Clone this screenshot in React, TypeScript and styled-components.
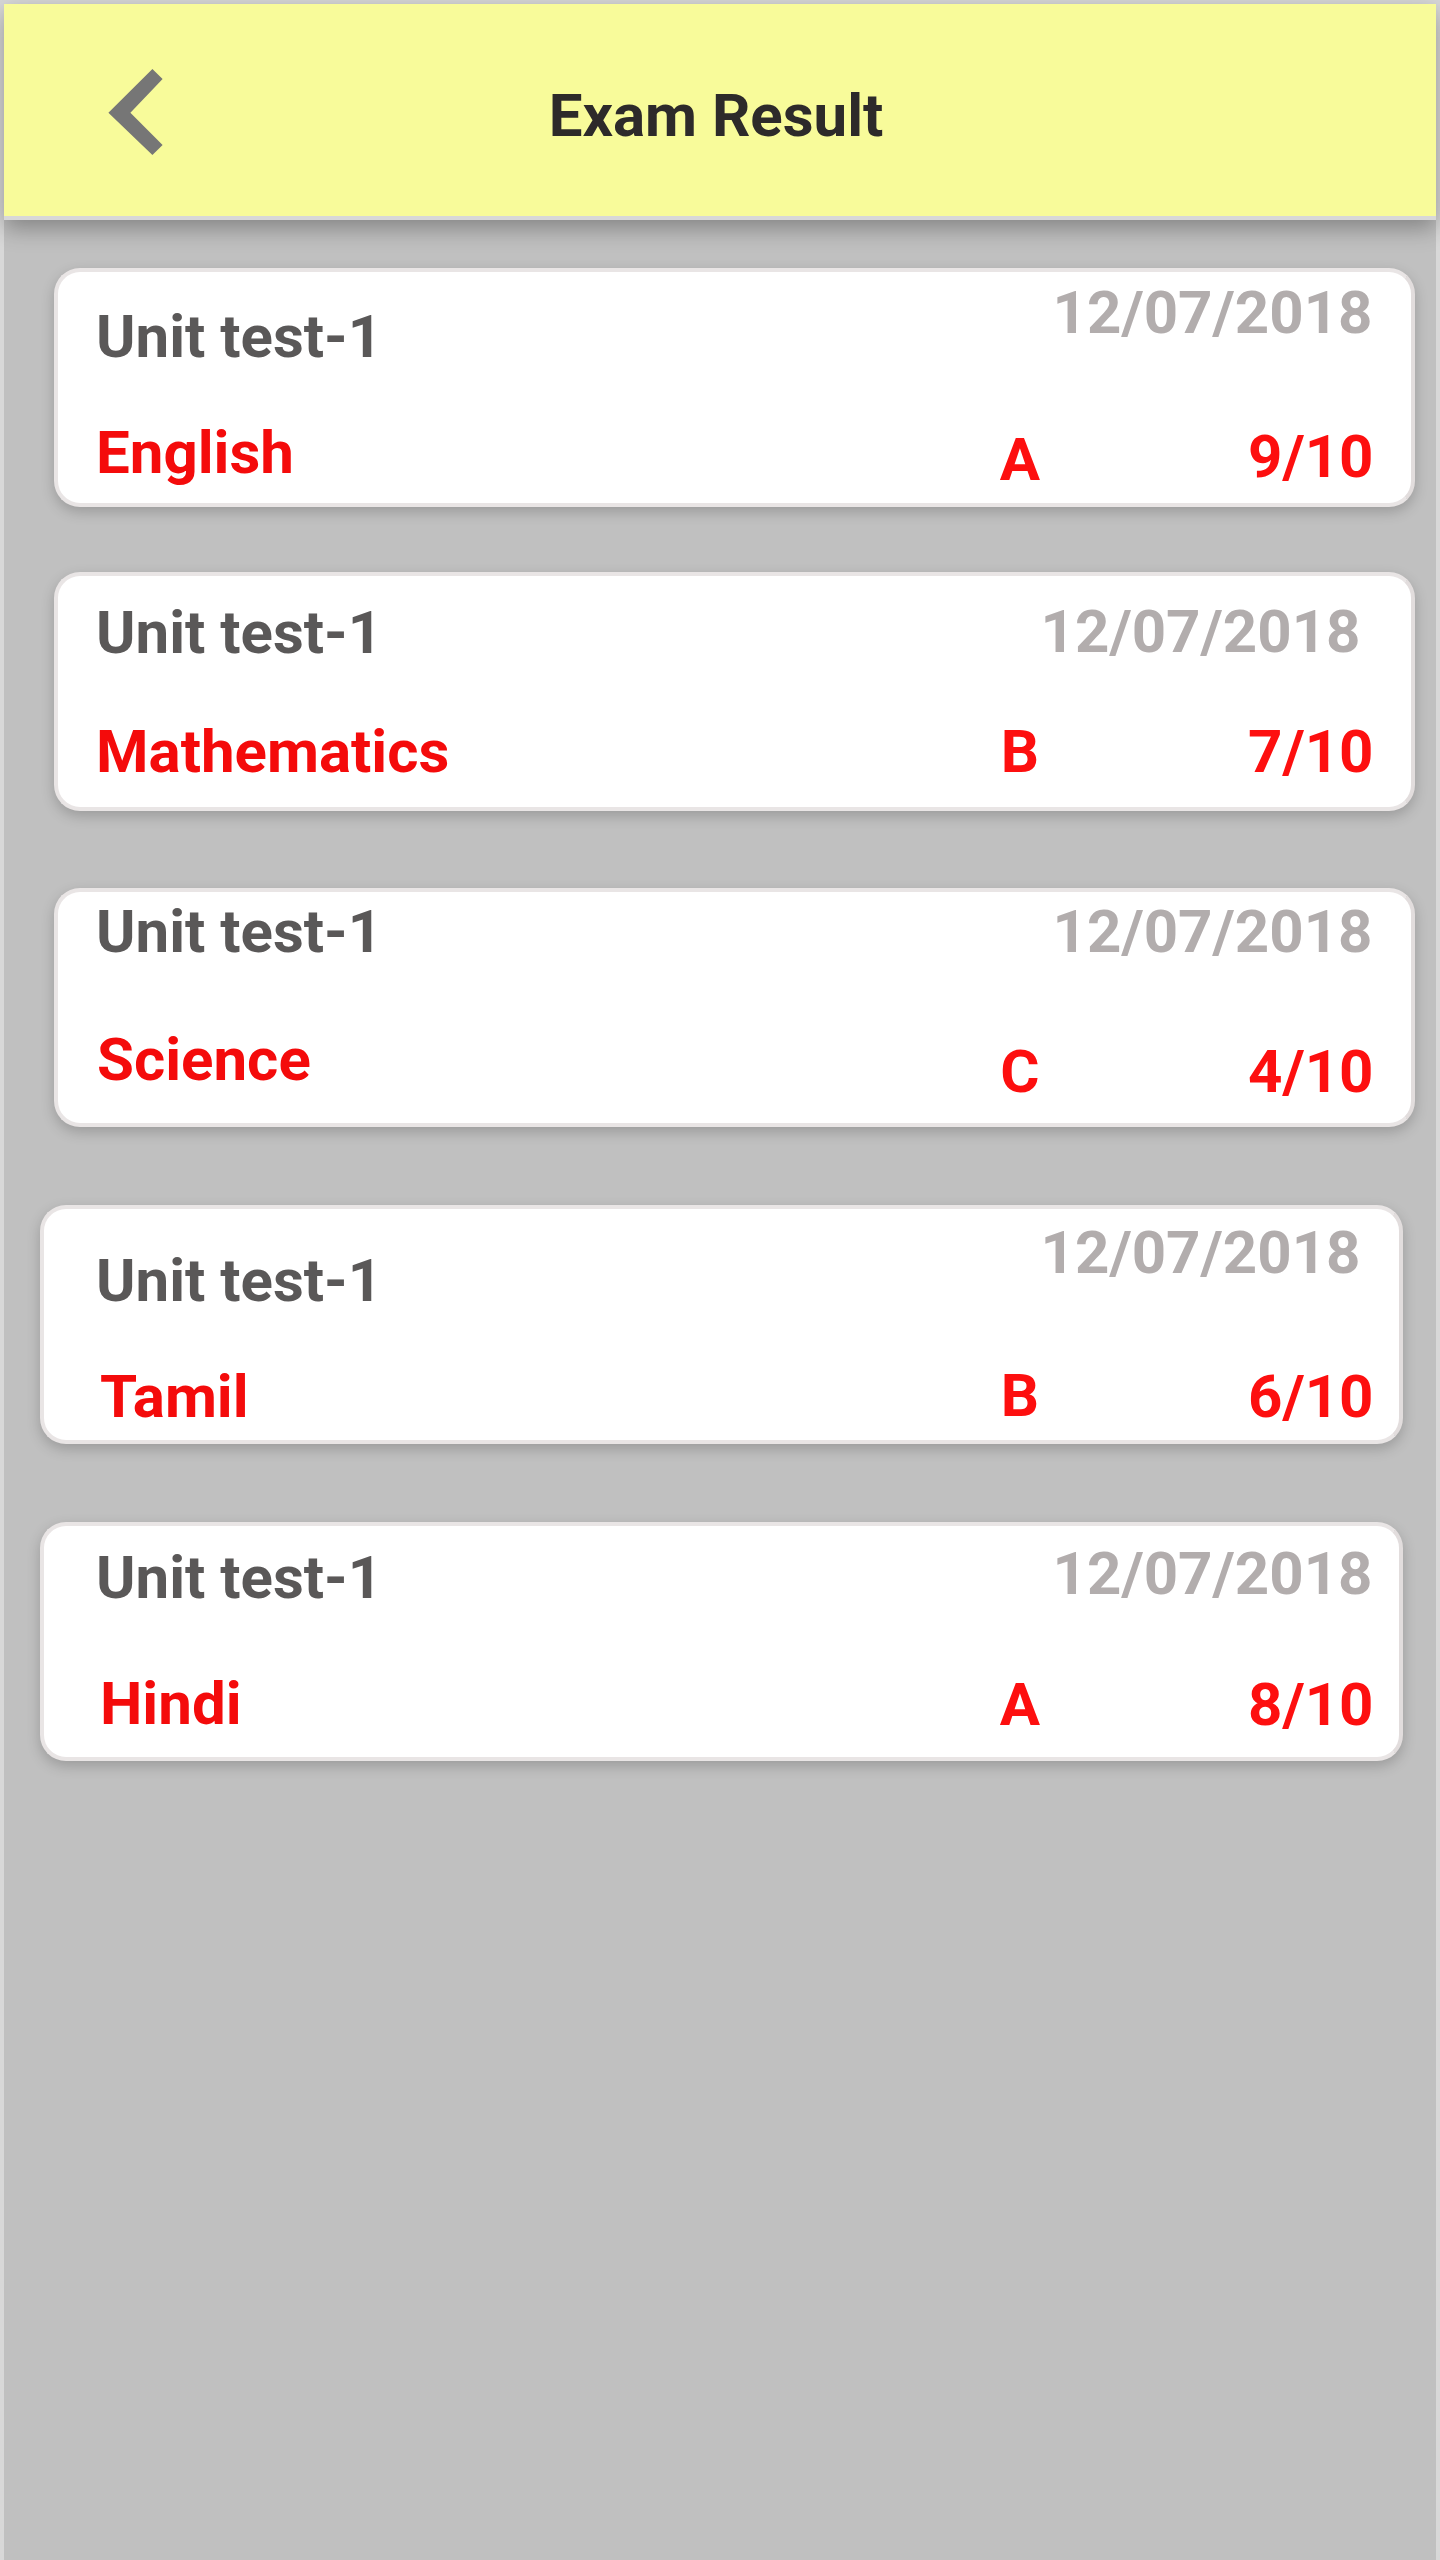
import React from "react";
import styled, { createGlobalStyle } from "styled-components";

const GlobalStyle = createGlobalStyle`
  html, body {
    margin: 0;
    padding: 0;
    background: #c0c0c0;
  }
  body {
    font-family: "Roboto", "Noto Sans", sans-serif;
  }
`;

const Screen = styled.div`
  min-height: 100vh;
  box-sizing: border-box;
  border: 4px solid #d8d8d8;
  border-bottom: none;
  background: #c0c0c0;
  display: flex;
  flex-direction: column;
`;

const Header = styled.header`
  position: relative;
  z-index: 1;
  height: 212px;
  background: #f8fb9a;
  border-bottom: 4px solid #d8d8d8;
  box-shadow: 0 8px 22px rgba(0, 0, 0, 0.32);
  display: grid;
  grid-template-columns: 1fr auto 1fr;
  align-items: center;
`;

const BackButton = styled.button`
  justify-self: start;
  display: flex;
  margin: 4px 0 0 104px;
  padding: 0;
  border: none;
  background: none;
  cursor: pointer;
`;

const Title = styled.h1`
  margin: 11px 8px 0 0;
  font: 700 60px/60px "Roboto", sans-serif;
  color: #2d2a2a;
`;

const List = styled.main`
  display: flex;
  flex-direction: column;
  padding: 48px 0 40px;
`;

type CardLayout = {
  mt: number;
  ml: number;
  mr: number;
  titleLeft: number;
  dateRight: number;
  t: number;
  d: number;
  subjectLeft: number;
  scoreRight: number;
  s: number;
  g: number;
  sc: number;
};

const Card = styled.section<{ $mt: number; $ml: number; $mr: number }>`
  box-sizing: border-box;
  height: 239px;
  margin: ${(p) => p.$mt}px ${(p) => p.$mr}px 0 ${(p) => p.$ml}px;
  background: #ffffff;
  border: 4px solid #e9e5e5;
  border-right-color: #e2dddd;
  border-radius: 26px;
  box-shadow: 0 5px 14px rgba(0, 0, 0, 0.2);
  display: flex;
  flex-direction: column;
`;

const TopRow = styled.div<{ $left: number; $right: number }>`
  height: 120px;
  display: flex;
  justify-content: space-between;
  align-items: flex-start;
  padding: 0 ${(p) => p.$right}px 0 ${(p) => p.$left}px;
`;

const BottomRow = styled.div<{ $left: number; $right: number }>`
  display: flex;
  align-items: flex-start;
  padding: 0 ${(p) => p.$right}px 0 ${(p) => p.$left}px;
`;

const TestName = styled.span<{ $mt: number }>`
  margin-top: ${(p) => p.$mt}px;
  font: 700 60px/60px "Roboto", sans-serif;
  color: #5a5858;
  white-space: nowrap;
`;

const ExamDate = styled.span<{ $mt: number }>`
  margin-top: ${(p) => p.$mt}px;
  font: 700 60px/60px "Roboto", sans-serif;
  color: #b2adad;
  white-space: nowrap;
`;

const Subject = styled.span<{ $mt: number }>`
  flex: 1;
  margin-top: ${(p) => p.$mt}px;
  font: 700 60px/60px "Roboto", sans-serif;
  color: #f40b0b;
  white-space: nowrap;
`;

const Grade = styled.span<{ $mt: number }>`
  width: 100px;
  margin: ${(p) => p.$mt}px 103.5px 0 0;
  text-align: center;
  font: 700 60px/60px "Roboto", sans-serif;
  color: #fd0f0f;
`;

const Score = styled.span<{ $mt: number }>`
  width: 200px;
  margin-top: ${(p) => p.$mt}px;
  text-align: right;
  font: 700 60px/60px "Roboto", sans-serif;
  color: #fd0f0f;
`;

type Result = {
  test: string;
  date: string;
  subject: string;
  grade: string;
  score: string;
  layout: CardLayout;
};

const results: Result[] = [
  {
    test: "Unit test-1",
    date: "12/07/2018",
    subject: "English",
    grade: "A",
    score: "9/10",
    layout: { mt: 0, ml: 50, mr: 21, titleLeft: 38, dateRight: 38.5, t: 34.5, d: 10.5, subjectLeft: 38, scoreRight: 37.5, s: 30.5, g: 37.5, sc: 34.5 },
  },
  {
    test: "Unit test-1",
    date: "12/07/2018",
    subject: "Mathematics",
    grade: "B",
    score: "7/10",
    layout: { mt: 65, ml: 50, mr: 21, titleLeft: 38, dateRight: 50.5, t: 26.5, d: 25.5, subjectLeft: 38, scoreRight: 37.5, s: 25.5, g: 25.5, sc: 25.5 },
  },
  {
    test: "Unit test-1",
    date: "12/07/2018",
    subject: "Science",
    grade: "C",
    score: "4/10",
    layout: { mt: 77, ml: 50, mr: 21, titleLeft: 38, dateRight: 38.5, t: 9.5, d: 9.5, subjectLeft: 39, scoreRight: 37.5, s: 17.5, g: 29.5, sc: 29.5 },
  },
  {
    test: "Unit test-1",
    date: "12/07/2018",
    subject: "Tamil",
    grade: "B",
    score: "6/10",
    layout: { mt: 78, ml: 36, mr: 33, titleLeft: 52, dateRight: 38.5, t: 41.5, d: 13.5, subjectLeft: 56, scoreRight: 25.5, s: 37.5, g: 37, sc: 37.5 },
  },
  {
    test: "Unit test-1",
    date: "12/07/2018",
    subject: "Hindi",
    grade: "A",
    score: "8/10",
    layout: { mt: 78, ml: 36, mr: 33, titleLeft: 52, dateRight: 26.5, t: 21.5, d: 17.5, subjectLeft: 56, scoreRight: 25.5, s: 27.5, g: 28.5, sc: 28.5 },
  },
];

const BackIcon = () => (
  <svg width="56" height="88" viewBox="0 0 56 88" aria-hidden="true">
    <polygon
      points="44.4,1 54.6,11 22.4,44.7 54.6,77 44.4,87 0.4,44.7"
      fill="#767676"
    />
  </svg>
);

const ResultCard = ({ r }: { r: Result }) => {
  const l = r.layout;
  return (
    <Card $mt={l.mt} $ml={l.ml} $mr={l.mr}>
      <TopRow $left={l.titleLeft} $right={l.dateRight}>
        <TestName $mt={l.t}>{r.test}</TestName>
        <ExamDate $mt={l.d}>{r.date}</ExamDate>
      </TopRow>
      <BottomRow $left={l.subjectLeft} $right={l.scoreRight}>
        <Subject $mt={l.s}>{r.subject}</Subject>
        <Grade $mt={l.g}>{r.grade}</Grade>
        <Score $mt={l.sc}>{r.score}</Score>
      </BottomRow>
    </Card>
  );
};

export default function App() {
  return (
    <>
      <GlobalStyle />
      <Screen>
        <Header>
          <BackButton aria-label="Back">
            <BackIcon />
          </BackButton>
          <Title>Exam Result</Title>
          <span />
        </Header>
        <List>
          {results.map((r) => (
            <ResultCard key={r.subject} r={r} />
          ))}
        </List>
      </Screen>
    </>
  );
}
